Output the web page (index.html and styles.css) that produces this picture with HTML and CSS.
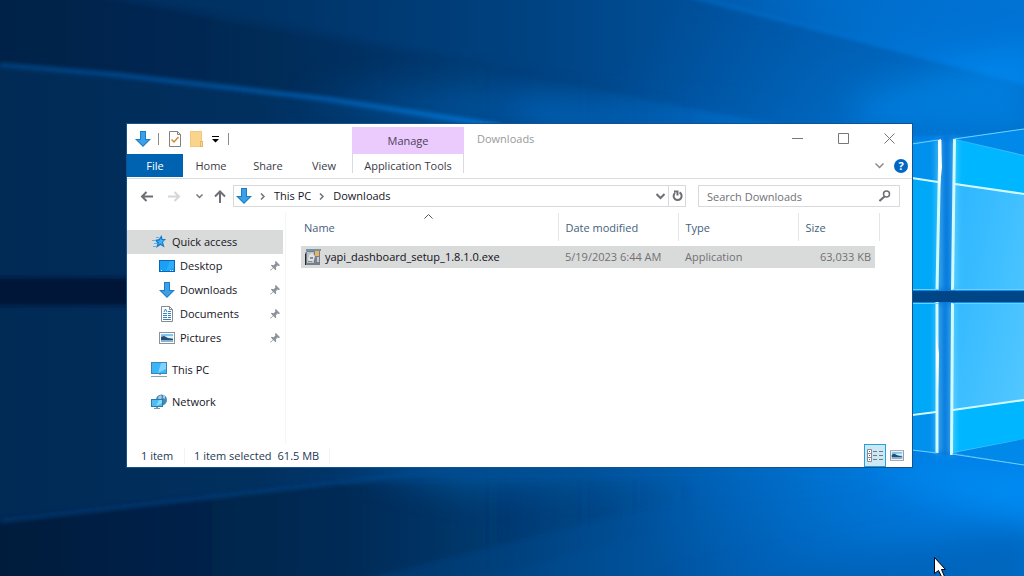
FILE: index.html
```html
<!DOCTYPE html>
<html lang="en">
<head>
<meta charset="utf-8">
<title>Downloads</title>
<link rel="stylesheet" href="styles.css">
</head>
<body>
<svg class="wallpaper" viewBox="0 0 1024 576" preserveAspectRatio="xMidYMid slice" aria-hidden="true">
  <defs>
    <linearGradient id="base" x1="0" x2="1" y1="0" y2="0">
      <stop offset="0" stop-color="#012a55"/><stop offset=".25" stop-color="#01305f"/><stop offset=".5" stop-color="#004482"/><stop offset=".75" stop-color="#005eb2"/><stop offset="1" stop-color="#007be0"/>
    </linearGradient>
    <radialGradient id="glow" gradientUnits="userSpaceOnUse" cx="980" cy="290" r="440" gradientTransform="translate(0 30) scale(1 .9)">
      <stop offset="0" stop-color="#0095fb"/><stop offset=".5" stop-color="#0080e6" stop-opacity=".75"/><stop offset="1" stop-color="#0066c0" stop-opacity="0"/>
    </radialGradient>
    <linearGradient id="beam" gradientUnits="userSpaceOnUse" x1="0" x2="900" y1="0" y2="0">
      <stop offset="0" stop-color="#00519e" stop-opacity=".25"/><stop offset=".5" stop-color="#0069c4" stop-opacity=".8"/><stop offset="1" stop-color="#0080ed" stop-opacity=".8"/>
    </linearGradient>
    <linearGradient id="ray" gradientUnits="userSpaceOnUse" x1="0" x2="540" y1="0" y2="0">
      <stop offset="0" stop-color="#004486"/><stop offset=".6" stop-color="#005fb4"/><stop offset="1" stop-color="#0a83e8"/>
    </linearGradient>
    <linearGradient id="dark" gradientUnits="userSpaceOnUse" x1="0" x2="700" y1="0" y2="0">
      <stop offset="0" stop-color="#001b3c"/><stop offset=".5" stop-color="#002852" stop-opacity=".75"/><stop offset="1" stop-color="#003f79" stop-opacity="0"/>
    </linearGradient>
    <linearGradient id="pane" x1="0" x2="1" y1="0" y2="1"><stop offset="0" stop-color="#27b4ff"/><stop offset="1" stop-color="#56c9ff"/></linearGradient>
    <filter id="soft" x="-30%" y="-30%" width="160%" height="160%"><feGaussianBlur stdDeviation="2"/></filter>
    <filter id="mist" x="-50%" y="-150%" width="200%" height="400%"><feGaussianBlur stdDeviation="16"/></filter>
    <filter id="shine" x="-5" y="-.2" width="11" height="1.4"><feGaussianBlur stdDeviation="3"/></filter>
  </defs>
  <path fill="url(#base)" d="M0 0h1024v576H0z"/>
  <path fill="url(#glow)" d="M500 0h524v576H500z"/>
  <path fill="url(#dark)" filter="url(#soft)" d="M-10-10H90L830 124H500L327 99 118 75-10 64z" opacity=".55"/>
  <path fill="url(#beam)" filter="url(#mist)" d="M300 92L480 86l200 44H440z" opacity=".5"/>
  <path fill="#0078dc" filter="url(#mist)" d="M500 100l300 24H540z" opacity=".55"/>
  <path fill="#003b78" filter="url(#soft)" d="M90-4H690L1030 86v50H840z" opacity=".25"/>
  <path fill="#006fd0" filter="url(#mist)" d="M700-20h400v95z" opacity=".6"/>
  <path stroke="#0879db" stroke-width="2" filter="url(#soft)" d="M690-4L1030 84" opacity=".8"/>
  <path fill="#0090f5" filter="url(#mist)" d="M850 100l180-60v90H870z" opacity=".45"/>
  <path fill="none" stroke="url(#ray)" stroke-width="4" filter="url(#soft)" d="M0 65L118 75 327 99 500 126"/>
  <path fill="#001737" filter="url(#soft)" d="M-10 278h160v27H-10z"/>
  <path fill="url(#dark)" filter="url(#soft)" d="M-10 521C180 499 330 480 440 472L900 466 490 576H-10z" opacity=".35"/>
  <path fill="url(#dark)" filter="url(#soft)" d="M-10 521L330 484 760 480 360 580H-10z"/>
  <path fill="#0066ba" filter="url(#mist)" d="M340 460h560L460 490z" opacity=".55"/>
  <path stroke="#00509a" stroke-width="3" filter="url(#soft)" d="M0 521L490 465" opacity=".6"/>
  <path fill="#005cad" filter="url(#mist)" d="M660 600l380-80v90z" opacity=".6"/>
  <path fill="#0092fa" filter="url(#mist)" d="M870 470h180v58z" opacity=".7"/>
  <path fill="#0076dc" d="M936 138l20-2v320l-20-2z"/>
  <path fill="#00a8f8" d="M900 143l39-3v150h-39zM900 303h37v150l-37-4z"/>
  <path fill="#0090ed" d="M900 143l39-3v42l-39-5zM900 414l37-3v42l-37-4z"/>
  <path fill="url(#pane)" d="M954 139l70-10v161h-71zM953 303h71v162l-72-12z"/>
  <path fill="#00b6ff" d="M955 140l69 16v37l-69-10zM953 410l71-9v38l-71 13z"/>
  <path fill="#0089e9" d="M955 139l69-10v26zM953 453l71-14v26z"/>
  <g fill="none" stroke="#8beaff" filter="url(#shine)" opacity=".6">
    <path stroke-width="5" d="M939 140v150M938 303v150M954 139v151M952 303v151"/>
  </g>
  <path fill="#004687" d="M912 291h112v11H912z"/>
  <g fill="none" stroke="#d1faff">
    <path stroke-width="3" d="M940 140l-3 150M937 302v151M954.500 139L952.500 290M952.500 303L951.500 455"/>
    <path stroke-width="2" d="M912 178l26 4M912 415l24-3M955 184l69 10M953 410l71-10"/>
    <path stroke="#70cfff" d="M912 144l26-4M912 450l25 3M954 139l70-10M952 454l72 11M912 289.500h26M912 303.500h26M953 289.500h71M953 303.500h71"/>
  </g>
  <path fill="#fff" d="M938 140l3-1 1 28-3 29zM936 334l3 20-1 38-2-30z"/>
  <path fill="#fff" stroke="#000" d="M934.500 557.500v16l4-3 3 6h3l-3-7h4z"/>
</svg>

<svg class="symbols" aria-hidden="true">
  <symbol id="i-down" viewBox="0 0 16 16"><path d="M5 0h6v8h5l-8 8-8-8h5z" fill="#1c7dc4"/><path d="M6 1h4v8h3.500L8 14.500 2.500 9H6z" fill="#3ba0e6"/></symbol>
  <symbol id="i-picture" viewBox="0 0 16 12"><path fill="#8b929c" d="M0 0h16v12H0z"/><path fill="#fff" d="M1 1h14v10H1z"/><path fill="#80c6f1" d="M2 2h12v8H2z"/><path fill="#d9f0fb" d="M6 4h8v2H7z"/><path fill="#284d72" d="M2 5l3-1 4 2 5 1v1H2z"/><path fill="#86b3d0" d="M2 8h12v2H2z"/></symbol>
  <symbol id="i-pin" viewBox="0 0 12 12"><path fill="#8c929c" d="M7 0l5 5-1 1-2-.5-2 2 .5 2.500-1 1L4 8.500 1 11.500H0V11l3.500-3L1 5.500l1-1 2.500.5 2-2L6 1z"/></symbol>
</svg>

<main class="desktop">
  <section class="window" aria-label="Downloads">
    <header class="titlebar">
      <div class="quickbar">
        <svg class="icon16" aria-hidden="true"><use href="#i-down"/></svg>
        <span class="divider"></span>
        <button aria-label="Properties"><svg width="12" height="16" viewBox="0 0 12 16"><path fill="#fff" stroke="#85817e" d="M.5.500h8l3 3v12H.5z"/><path fill="none" stroke="#85817e" d="M8.500.500v3h3"/><path fill="none" stroke="#d08a34" stroke-width="1.500" d="M2.500 8.500l2.500 2.500 4.500-5"/></svg></button>
        <button aria-label="New folder"><svg width="13" height="16" viewBox="0 0 13 16"><path fill="#f3c978" d="M0 0h12v10h1v6H0z"/><path fill="#f8d48c" d="M1 1h10v9h-1v5H1z"/><path fill="#e9b65b" d="M10 10h3v6h-3z"/><path fill="#fbdc98" d="M11 11h1v4h-1z"/></svg></button>
        <button aria-label="Customize toolbar"><svg width="7" height="7" viewBox="0 0 7 7"><path d="M0 0h7v1H0zM0 3h7L3.500 6.500z"/></svg></button>
        <span class="divider"></span>
      </div>
      <div class="manage">Manage</div>
      <h1 class="title">Downloads</h1>
      <div class="captions">
        <button aria-label="Minimize"><svg width="11" height="11"><path stroke="#777" d="M0 5.500h11"/></svg></button>
        <button aria-label="Maximize"><svg width="11" height="11"><path fill="none" stroke="#777" d="M.5.500h10v10H.5z"/></svg></button>
        <button aria-label="Close"><svg width="11" height="11"><path stroke="#777" d="M.5.500l10 10M10.500.500l-10 10"/></svg></button>
      </div>
    </header>

    <nav class="ribbon" aria-label="Ribbon">
      <button class="tab file">File</button>
      <button class="tab">Home</button>
      <button class="tab">Share</button>
      <button class="tab">View</button>
      <button class="tab tools">Application Tools</button>
      <div class="ribbon-end">
        <button aria-label="Expand ribbon"><svg width="9" height="6"><path fill="none" stroke="#8b8b8b" stroke-width="1.500" d="M.5.500l4 4 4-4"/></svg></button>
        <button class="help" aria-label="Help">?</button>
      </div>
    </nav>

    <div class="address-row">
      <div class="history">
        <button aria-label="Back"><svg width="13" height="11"><path fill="none" stroke="#6e6e74" stroke-width="2" d="M13 5.500H2M6.500 1L2 5.500 6.500 10"/></svg></button>
        <button aria-label="Forward"><svg width="13" height="11"><path fill="none" stroke="#d6d6d6" stroke-width="2" d="M0 5.500h11M6.500 1L11 5.500 6.500 10"/></svg></button>
        <button aria-label="Recent locations"><svg width="7" height="5"><path fill="none" stroke="#77777c" stroke-width="1.500" d="M.5.500l3 3 3-3"/></svg></button>
        <button aria-label="Up"><svg width="12" height="13"><path fill="none" stroke="#6e6e74" stroke-width="2" d="M6 13V2M1 6.500L6 1.500l5 5"/></svg></button>
      </div>
      <div class="address">
        <svg class="icon16" aria-hidden="true"><use href="#i-down"/></svg>
        <svg class="chevron" width="5" height="7" aria-hidden="true"><path fill="none" stroke="#707078" stroke-width="1.500" d="M1 .5l3 3-3 3"/></svg>
        <button>This PC</button>
        <svg class="chevron" width="5" height="7" aria-hidden="true"><path fill="none" stroke="#707078" stroke-width="1.500" d="M1 .5l3 3-3 3"/></svg>
        <button>Downloads</button>
        <button class="previous" aria-label="Previous locations"><svg width="9" height="7"><path fill="none" stroke="#707078" stroke-width="2" d="M.5 1l4 4 4-4"/></svg></button>
        <button class="refresh" aria-label="Refresh"><svg width="11" height="12"><path fill="none" stroke="#6e6e74" stroke-width="2" d="M7.500 2.500a4 4 0 1 1-4.500.500M2 1.500h3.500v4"/></svg></button>
      </div>
      <form class="search">
        <input type="search" aria-label="Search Downloads" placeholder="Search Downloads">
        <button type="button" aria-label="Search"><svg width="12" height="12"><circle cx="7.500" cy="4" r="3" fill="none" stroke="#6e6e74" stroke-width="1.500"/><path stroke="#6e6e74" stroke-width="2" d="M5.500 6.500L.5 11"/></svg></button>
      </form>
    </div>

    <div class="content">
      <nav class="sidebar" aria-label="Folders">
        <a class="place selected" href="#"><svg class="icon16" viewBox="0 0 16 16" aria-hidden="true"><path fill="#1878c8" d="M10.500 1l1 4H15l-3 3 1.500 5.500L9.500 11 5 14l1.500-4.500L4 6l4-1z"/><path fill="#3db1f5" d="M10 4l.5 2H13l-2 2 .5 3-2-1.500L7.500 11l.5-2.500L6 7l2.500-.5z"/><path stroke="#5ab4ec" d="M1 6.500h4M3 9.500h3M2 12.500h3M5 3.500h3"/></svg>Quick access</a>
        <a class="place child" href="#"><svg class="icon16" viewBox="0 0 16 16" aria-hidden="true"><path fill="#0867b4" d="M0 2h16v12H0z"/><path fill="#1ba0f4" d="M1 3h14v10H1z"/><path fill="#42b9ff" d="M11 3h4v7l-8 3z" opacity=".5"/><path stroke="#d7f4ff" d="M2 12.500h1m8 0h1m1 0h1"/></svg>Desktop<svg class="pin" aria-hidden="true"><use href="#i-pin"/></svg></a>
        <a class="place child" href="#"><svg class="icon16" aria-hidden="true"><use href="#i-down"/></svg>Downloads<svg class="pin" aria-hidden="true"><use href="#i-pin"/></svg></a>
        <a class="place child" href="#"><svg class="icon16" viewBox="0 0 16 16" aria-hidden="true"><path fill="#fff" stroke="#858b92" d="M2.500.500h8l3 3v12h-11z"/><path fill="none" stroke="#858b92" d="M10.500.500v3h3"/><path fill="none" stroke="#3584bd" d="M5 6l1.500-3L8 6M9 5.500h3M4 7.500h4m1 0h3M4 9.500h4m1 0h3M4 11.500h4m1 0h3M4 13.500h8"/></svg>Documents<svg class="pin" aria-hidden="true"><use href="#i-pin"/></svg></a>
        <a class="place child" href="#"><svg class="icon16" aria-hidden="true"><use href="#i-picture"/></svg>Pictures<svg class="pin" aria-hidden="true"><use href="#i-pin"/></svg></a>
        <a class="place root" href="#"><svg class="icon16" viewBox="0 0 16 16" aria-hidden="true"><path fill="#3e84b5" d="M0 0h16v12H0z"/><path fill="#3bb6f7" d="M1 1h14v10H1z"/><path fill="#7ed3ff" d="M10 1h5v6l-8 4z"/><path fill="#7897ad" d="M7 12h3v1H4h8z"/><path fill="#8ba1b1" d="M0 14h16v1H0z"/></svg>This PC</a>
        <a class="place root" href="#"><svg class="icon16" viewBox="0 0 16 16" aria-hidden="true"><circle cx="10.500" cy="6" r="5.500" fill="#4a88b4"/><path fill="#a5cce6" d="M7 3l3-2 1 3-3 2zm5-2l2 1v3l-2-1z"/><path fill="#287bae" d="M0 5h12v8H0z"/><path fill="#4fbdf4" d="M1 6h10v6H1z"/><path fill="#89dcff" d="M8 6h3v3l-6 3z"/><path fill="#8099a9" d="M5 13h2v1h2v1H3v-1h2z"/></svg>Network</a>
      </nav>
      <div class="files">
        <svg class="sort" width="9" height="5" aria-hidden="true"><path fill="none" stroke="#55555b" d="M.5 4.500l4-4 4 4"/></svg>
        <table>
          <colgroup><col class="c-name"><col class="c-mid"><col class="c-mid"><col class="c-size"><col class="c-end"></colgroup>
          <thead><tr><th scope="col">Name</th><th scope="col">Date modified</th><th scope="col">Type</th><th scope="col" colspan="2">Size</th></tr></thead>
          <tbody>
            <tr class="gap"><td colspan="5"></td></tr>
            <tr class="file-row">
              <td><span class="filename"><svg class="icon16" viewBox="0 0 16 16" aria-hidden="true"><path fill="#7393aa" d="M1 0h15v2H1z"/><path fill="#777e87" d="M2 2h13v14H0V4z"/><path fill="#bac1c7" d="M2 3h7v11H2z"/><path fill="#e7b465" d="M10 2h4v5h-4z"/><path fill="#77828c" d="M10 7h2v7h-2z"/><path fill="#20282f" d="M0 5h1v11H0z"/><path fill="#dfe2e5" d="M4 6l3-2 3 3-1 4-3 2-3-2z"/><path fill="#858c94" d="M5 8h3v2H5zM3 12h4v1H3z"/><path fill="#c4c9cf" d="M12 8h2v5h-2z"/></svg>yapi_dashboard_setup_1.8.1.0.exe</span></td>
              <td>5/19/2023 6:44 AM</td><td>Application</td><td class="number">63,033 KB</td><td class="blank"></td>
            </tr>
          </tbody>
        </table>
      </div>
    </div>

    <footer class="status">
      <span class="count">1 item</span>
      <span class="selection"><span>1 item selected</span><span>61.5 MB</span></span>
      <div class="views">
        <button class="active" aria-label="Details view"><svg width="16" height="13"><path fill="#fff" stroke="#8c8791" d="M.5.500h4v12h-4zM.5 4.500h4M.5 8.500h4"/><path stroke="#506273" d="M2 2.500h1M2 6.500h1M2 10.500h1"/><path stroke="#6f7b84" stroke-dasharray="4 2" d="M6 2.500h10M6 6.500h10M6 10.500h10"/></svg></button>
        <button aria-label="Large icons view"><svg width="14" height="11"><use href="#i-picture"/></svg></button>
      </div>
    </footer>
  </section>
</main>
</body>
</html>
```
FILE: styles.css
```css
* { box-sizing: border-box; }
body {
  margin: 0;
  background: #003f7c;
  color: #15151f;
  font: 11px/16px "Open Sans", "Noto Sans", sans-serif;
}
button {
  display: flex;
  align-items: center;
  justify-content: center;
  padding: 0;
  border: 0;
  background: none;
  color: inherit;
  font: inherit;
}
svg { flex: none; }
.wallpaper {
  position: absolute;
  inset: 0;
  z-index: -1;
  width: 100%;
  height: 100%;
}
.symbols { display: none; }
.icon16 { width: 16px; height: 16px; }
.desktop {
  display: grid;
  min-height: 100vh;
  padding: 124px 112px 109px 127px;
}
.window {
  display: flex;
  flex-direction: column;
  background: #fff;
  box-shadow: 0 0 0 1px #17518b;
}
.titlebar { display: flex; height: 30px; }
.quickbar {
  display: flex;
  align-items: center;
  gap: 9px;
  width: 225px;
  padding-left: 8px;
}
.divider { width: 1px; height: 12px; background: #8b8b8b; }
.quickbar .divider:first-of-type { margin: 0 1px 0 -2px; }
.manage {
  width: 112px;
  margin-top: 3px;
  padding-top: 6px;
  background: #ebcbfd;
  color: #4d4059;
  text-align: center;
}
.title {
  margin: 0;
  padding: 7px 13px;
  color: #999;
  font-size: 11px;
  font-weight: 400;
}
.captions { display: flex; margin-left: auto; }
.captions button { width: 46px; height: 28px; }
.ribbon {
  display: flex;
  height: 25px;
  border-bottom: 1px solid #dadbdc;
  color: #3b3b46;
}
.tab { width: 56px; height: 23px; padding-top: 1px; }
.tab.file { background: #0063b1; color: #fff; }
.tab.tools {
  width: 112px;
  margin-left: 1px;
  height: 19px;
  padding-top: 5px;
  border: solid #d8dadd;
  border-width: 0 1px;
}
.tab:nth-child(3) { width: 58px; }
.tab:nth-child(4) { width: 54px; }
.ribbon-end {
  display: flex;
  align-items: center;
  gap: 10px;
  margin-left: auto;
  padding-right: 4px;
}
.help {
  width: 14px;
  height: 14px;
  border-radius: 50%;
  background: #0067c5;
  color: #fff;
  font-weight: 700;
}
.address-row { display: flex; height: 34px; padding: 6px 12px 6px 13px; }
.history { display: flex; align-items: center; width: 93px; gap: 15px; }
.history button:last-child { margin-left: -4px; }
.address {
  display: flex;
  flex: 1;
  align-items: center;
  border: 1px solid #d9d9d9;
  padding-left: 2px;
}
.address .chevron { margin: 0 9px 0 8px; }
.address .previous { width: 16px; height: 20px; margin-left: auto; }
.address .refresh { width: 17px; height: 20px; border-left: 1px solid #d9d9d9; }
.search {
  display: flex;
  width: 202px;
  margin-left: 12px;
  border: 1px solid #d9d9d9;
}
.search input {
  flex: 1;
  min-width: 0;
  padding: 1px 8px 0;
  border: 0;
  background: none;
  font: inherit;
}
.search input::placeholder { color: #717177; }
.search button { width: 28px; }
.content { display: flex; flex: 1; }
.sidebar {
  width: 159px;
  padding: 17px 2px 0 0;
  border-right: 1px solid #f5f5f5;
}
.place {
  display: flex;
  align-items: center;
  gap: 5px;
  height: 24px;
  padding: 0 0 0 24px;
  color: inherit;
  text-decoration: none;
}
.place.selected { background: #d9dada; }
.place.child { padding-left: 32px; }
.place.root { margin-top: 8px; }
.pin { width: 10px; height: 10px; margin: 0 3px 0 auto; }
.files { position: relative; flex: 1; padding-left: 15px; }
.sort { position: absolute; top: 1px; left: 138px; }
table { width: 578px; border-collapse: collapse; table-layout: fixed; }
.c-name { width: 257px; }
.c-mid { width: 120px; }
.c-size { width: 77px; }
.c-end { width: 4px; }
th {
  height: 28px;
  padding: 2px 6px 0 7px;
  border-right: 1px solid #e5e5e5;
  color: #43617c;
  font-weight: 400;
  text-align: left;
}
th:first-child { padding-left: 3px; }
td { height: 22px; padding: 0 6px 0 7px; background: #d9dada; color: #737073; }
td:first-child { padding-left: 4px; }
.gap td { height: 5px; padding: 0; background: none; }
.filename { display: flex; align-items: center; gap: 4px; color: #101018; }
td.number { padding: 0 4px 0 0; text-align: right; }
td.blank { padding: 0; background: none; }
.status {
  display: flex;
  align-items: center;
  height: 23px;
  padding: 0 4px 0 14px;
  color: #1e3954;
}
.count { width: 43px; }
.selection {
  display: flex;
  gap: 6px;
  padding: 0 10px 0 9px;
  border: solid #f3f3f3;
  border-width: 0 1px;
}
.views { display: flex; margin-left: auto; }
.views button { width: 22px; height: 23px; }
.views .active { border: 1px solid #26a0da; background: #cce8f5; }
```
